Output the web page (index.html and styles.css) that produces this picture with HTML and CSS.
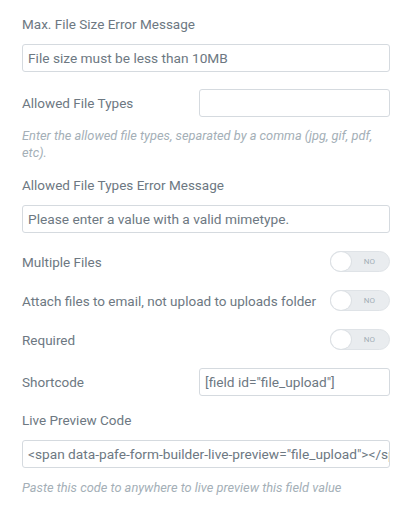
FILE: index.html
```html
<!DOCTYPE html>
<html>
<head>
<meta charset="utf-8">
<link rel="stylesheet" href="styles.css">
</head>
<body>
<div class="panel">
  <div class="control stacked c-first">
    <div class="label">Max. File Size Error Message</div>
    <div class="input">File size must be less than 10MB</div>
  </div>

  <div class="control inline c-types">
    <div class="label">Allowed File Types</div>
    <div class="input narrow"></div>
  </div>
  <div class="desc d-types">Enter the allowed file types, separated by a comma (jpg, gif, pdf, etc).</div>

  <div class="control stacked c-err">
    <div class="label">Allowed File Types Error Message</div>
    <div class="input">Please enter a value with a valid mimetype.</div>
  </div>

  <div class="control inline switch-row s-first">
    <div class="label">Multiple Files</div>
    <div class="switch"><span class="knob"></span><span class="no">NO</span></div>
  </div>
  <div class="control inline switch-row">
    <div class="label">Attach files to email, not upload to uploads folder</div>
    <div class="switch"><span class="knob"></span><span class="no">NO</span></div>
  </div>
  <div class="control inline switch-row">
    <div class="label">Required</div>
    <div class="switch"><span class="knob"></span><span class="no">NO</span></div>
  </div>

  <div class="control inline c-short">
    <div class="label">Shortcode</div>
    <div class="input narrow">[field id="file_upload"]</div>
  </div>

  <div class="control stacked c-live">
    <div class="label">Live Preview Code</div>
    <div class="input clip">&lt;span data-pafe-form-builder-live-preview="file_upload"&gt;&lt;/span&gt;</div>
  </div>
  <div class="desc d-live">Paste this code to anywhere to live preview this field value</div>
</div>
</body>
</html>
```

FILE: styles.css
```css
html, body {
  margin: 0;
  padding: 0;
  background: #ffffff;
}

body {
  font-family: Roboto, "Liberation Sans", sans-serif;
  color: #6d7882;
  width: 400px;
  height: 512px;
  overflow: hidden;
}

.panel {
  display: flex;
  flex-direction: column;
  padding: 16px 10px 0 22px;
}

.label {
  font-size: 13.5px;
  line-height: 16px;
  color: #6d7882;
  white-space: nowrap;
}

.control.stacked {
  display: flex;
  flex-direction: column;
  gap: 12px;
}

.control.inline {
  display: flex;
  align-items: center;
  justify-content: space-between;
}

.input {
  box-sizing: border-box;
  height: 28px;
  border: 1px solid #d5dadf;
  border-radius: 3px;
  padding: 0 5px;
  font-size: 13.7px;
  line-height: 26px;
  color: #6d7882;
  white-space: nowrap;
  overflow: hidden;
}

.input.narrow {
  width: 191px;
}

.input.clip {
  padding-right: 1px;
  text-overflow: clip;
}

.c-types { margin-top: 17px; }

.desc {
  font-size: 12.8px;
  line-height: 17px;
  font-style: italic;
  color: #a4afb7;
}

.d-types { margin-top: 10px; }

.c-err { margin-top: 16px; }

.switch-row { margin-top: 18px; height: 21px; }

.switch {
  position: relative;
  box-sizing: border-box;
  width: 60px;
  height: 21px;
  border-radius: 11px;
  background: #e9ecef;
  border: 1px solid #dfe3e7;
  flex-shrink: 0;
}

.knob {
  position: absolute;
  left: 0;
  top: 0;
  box-sizing: border-box;
  width: 20px;
  height: 19px;
  border-radius: 50%;
  background: #ffffff;
  box-shadow: 0 0 0 1px #dde1e5;
}

.no {
  position: absolute;
  right: 14px;
  top: 0;
  line-height: 19px;
  font-size: 8px;
  color: #a4afb7;
}

.c-short { margin-top: 18px; }

.c-live { margin-top: 16px; gap: 11px; }

.d-live { margin-top: 11px; }
```
